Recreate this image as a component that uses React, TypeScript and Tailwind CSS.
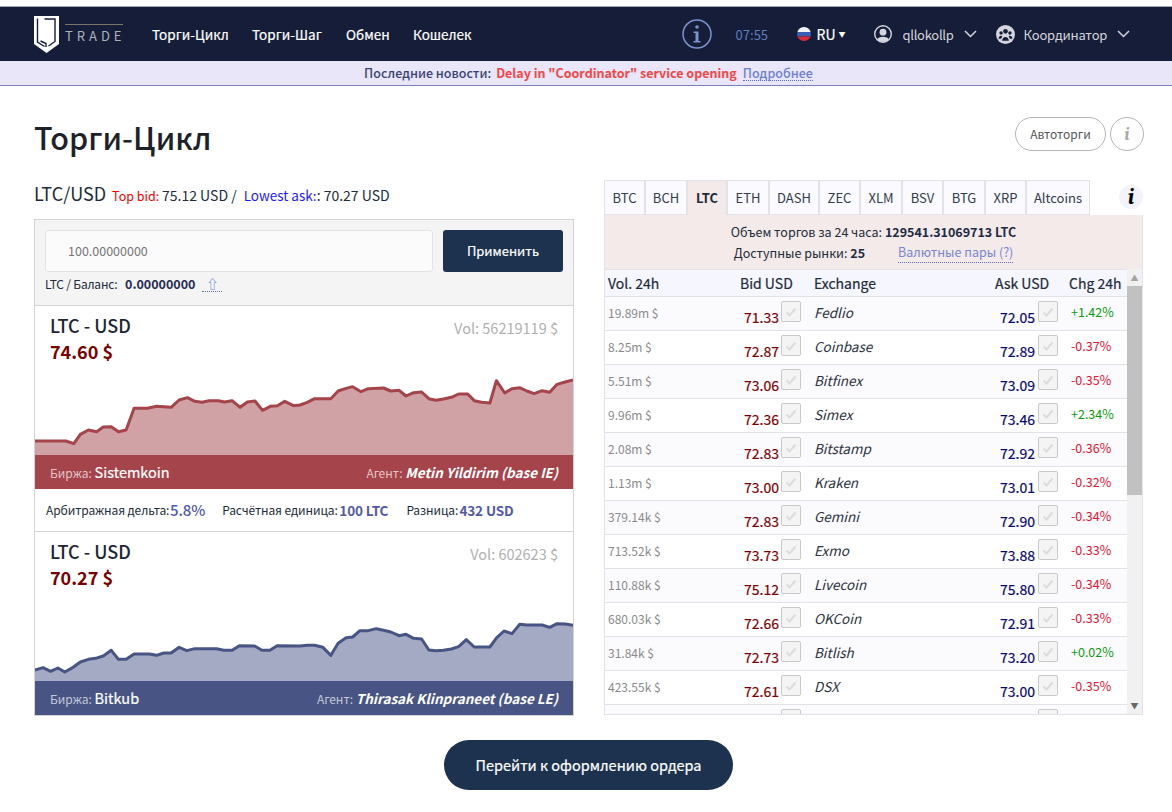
import React from "react";

const redPts = "40,693 125,693 147,701 165,673 187,660 210,665 228,651 250,650 270,665 291,660 313,595 350,595 375,589 415,592 437,570 460,563 480,574 500,577 520,572 545,572 562,576 583,572 605,592 625,576 646,573 667,601 688,589 708,587 728,574 752,587 770,585 790,577 810,566 855,566 875,543 897,535 915,530 938,545 958,536 1000,534 1020,543 1043,541 1062,558 1083,548 1105,546 1125,566 1145,571 1165,567 1187,562 1207,552 1232,552 1250,572 1270,577 1293,579 1311,512 1334,549 1354,536 1375,533 1395,543 1415,551 1437,542 1458,547 1478,523 1500,516 1522,510";
const bluePts = "40,540 62,533 83,544 103,534 122,546 145,532 165,516 187,508 207,505 228,498 250,481 270,508 291,508 313,492 355,492 375,496 395,489 415,489 437,472 458,482 480,476 540,476 560,481 583,481 603,467 645,468 665,481 687,481 707,467 770,468 790,466 810,466 833,472 855,496 875,460 897,443 915,441 935,422 958,422 980,416 1000,421 1020,426 1043,437 1062,433 1083,445 1105,447 1125,480 1145,482 1165,481 1187,477 1207,470 1228,449 1250,471 1293,471 1312,443 1332,423 1354,431 1375,403 1395,405 1437,405 1458,412 1478,401 1500,402 1522,406";

const rows: [string, string, string, string, string][] = [
  ["19.89m $", "71.33", "Fedlio", "72.05", "+1.42%"],
  ["8.25m $", "72.87", "Coinbase", "72.89", "-0.37%"],
  ["5.51m $", "73.06", "Bitfinex", "73.09", "-0.35%"],
  ["9.96m $", "72.36", "Simex", "73.46", "+2.34%"],
  ["2.08m $", "72.83", "Bitstamp", "72.92", "-0.36%"],
  ["1.13m $", "73.00", "Kraken", "73.01", "-0.32%"],
  ["379.14k $", "72.83", "Gemini", "72.90", "-0.34%"],
  ["713.52k $", "73.73", "Exmo", "73.88", "-0.33%"],
  ["110.88k $", "75.12", "Livecoin", "75.80", "-0.34%"],
  ["680.03k $", "72.66", "OKCoin", "72.91", "-0.33%"],
  ["31.84k $", "72.73", "Bitlish", "73.20", "+0.02%"],
  ["423.55k $", "72.61", "DSX", "73.00", "-0.35%"],
  ["", "", "", "", ""],
];

const tabs = ["BTC", "BCH", "LTC", "ETH", "DASH", "ZEC", "XLM", "BSV", "BTG", "XRP", "Altcoins"];
const tabW = [41, 42, 40, 42, 50, 41, 42, 41, 42, 41, 64];

function Check() {
  return (
    <span className="flex h-[21px] w-[20px] shrink-0 items-center justify-center rounded-[2px] border border-[#c9c9c9] bg-[#f4f4f4]">
      <svg width="12" height="10" viewBox="0 0 12 10" fill="none">
        <path d="M1.5 5.5 L4.5 8.5 L10.5 1.5" stroke="#dcdcdc" strokeWidth="2" />
      </svg>
    </span>
  );
}

function Chart({ pts, line, fill, top, h }: { pts: string; line: string; fill: string; top: number; h: number }) {
  const bottom = top + h * 3;
  return (
    <svg className="block w-full" height={h} viewBox={`40 ${top} 1482 ${h * 3}`} preserveAspectRatio="none">
      <polygon points={`40,${bottom} ${pts} 1522,${bottom}`} fill={fill} />
      <polyline points={pts} fill="none" stroke={line} strokeWidth="3" vectorEffect="non-scaling-stroke" strokeLinejoin="round" />
    </svg>
  );
}

function Card(p: { price: string; vol: string; pts: string; line: string; fill: string; bar: string; top: number; h: number; ex: string; agent: string; labelColor: string }) {
  return (
    <div>
      <div className="flex h-[70px] justify-between px-[15px] pt-[7px]">
        <div>
          <div className="text-[18px] font-medium leading-[24px] text-[#1d2433]">LTC - USD</div>
          <div className="mt-[1px] text-[18px] font-bold leading-[26px] text-[#7a0000]">{p.price}</div>
        </div>
        <div className="pt-[3px] text-[14.5px] leading-[24px] text-[#b0b0b0]">{p.vol}</div>
      </div>
      <Chart pts={p.pts} line={p.line} fill={p.fill} top={p.top} h={p.h} />
      <div className={`flex h-[34px] items-center justify-between px-[15px] text-white ${p.bar}`}>
        <div className="text-[14.5px] leading-[34px] [-webkit-text-stroke:0.2px]">
          <span className={`text-[12px] [-webkit-text-stroke:0px] ${p.labelColor}`}>Биржа: </span>
          {p.ex}
        </div>
        <div className="text-[13.5px] font-bold italic leading-[34px]">
          <span className={`text-[12px] font-normal not-italic ${p.labelColor}`}>Агент: </span>
          {p.agent}
        </div>
      </div>
    </div>
  );
}

function Logo() {
  return (
    <div className="flex items-start">
      <svg width="26" height="37" viewBox="0 0 26 37" fill="none">
        <path d="M0 0 H25 V28 L12.5 37 L0 28 Z" fill="#ffffff" />
        <path d="M3.5 2.5 V26 L10.5 30.5 M6.5 25 L12 27.5 V31" stroke="#151d38" strokeWidth="1.4" />
        <path d="M10.5 3 H21 V25.5 L14.5 30" stroke="#151d38" strokeWidth="1.4" />
      </svg>
      <div className="ml-[5px] mt-[8px] w-[58px]">
        <div className="h-px bg-[#7c7566]" />
        <div className="mt-[2px] text-[13px] leading-[18px] tracking-[4px] text-[#aeb2be]">TRADE</div>
      </div>
    </div>
  );
}

export default function App() {
  return (
    <div className="h-[812px] w-[1172px] overflow-hidden bg-white text-[14px] text-[#222b3a]" style={{ fontFamily: '"Noto Sans CJK JP", "Noto Sans", sans-serif' }}>
      <div className="h-[6px] bg-white" />
      <div className="h-px bg-[#a9a9a9]" />
      <header className="flex h-[54px] items-center bg-[#151d38] pl-[34px] text-white">
        <Logo />
        <nav className="ml-[29px] flex text-[13.5px] leading-[20px] [-webkit-text-stroke:0.2px]">
          <span className="w-[100px]">Торги-Цикл</span>
          <span className="w-[94px]">Торги-Шаг</span>
          <span className="w-[67px]">Обмен</span>
          <span>Кошелек</span>
        </nav>
        <div className="ml-[210px] flex items-center">
          <svg width="30" height="30" viewBox="0 0 30 30" fill="none" className="text-[#7d93cf]">
            <circle cx="15" cy="15" r="14" stroke="currentColor" strokeWidth="1.5" />
            <circle cx="15" cy="8" r="1.8" fill="currentColor" />
            <path d="M11.5 12.5 H16.5 V22 H18.5 V23.5 H11.5 V22 H13.5 V14 H11.5 Z" fill="currentColor" />
          </svg>
          <span className="ml-[24px] w-[61px] pt-[1px] text-[13px] text-[#5f7dc0]">07:55</span>
          <svg width="14" height="14" viewBox="0 0 14 14" className="rounded-full">
            <rect width="14" height="5" fill="#f2f2f4" />
            <rect y="5" width="14" height="4.5" fill="#3b5db5" />
            <rect y="9.5" width="14" height="4.5" fill="#d92b3a" />
          </svg>
          <span className="ml-[6px] text-[14px] leading-[20px] [-webkit-text-stroke:0.2px]">RU</span>
          <span className="ml-[3px] text-[7px]">▼</span>
          <svg className="ml-[28px]" width="18" height="18" viewBox="0 0 18 18">
            <circle cx="9" cy="9" r="8.3" fill="none" stroke="#d4d6dc" strokeWidth="1.4" />
            <circle cx="9" cy="7.2" r="3.4" fill="#d4d6dc" />
            <path d="M3.2 14.5 C4 10.8 14 10.8 14.8 14.5 C12 17.6 6 17.6 3.2 14.5 Z" fill="#d4d6dc" />
          </svg>
          <span className="ml-[11px] w-[50px] pt-[1px] text-[13px] tracking-[-0.3px] text-[#d4d6dc]">qllokollp</span>
          <svg className="ml-[11px]" width="13" height="8" viewBox="0 0 13 8" fill="none"><path d="M1 1 L6.5 6.5 L12 1" stroke="#d4d6dc" strokeWidth="1.5" /></svg>
          <svg className="ml-[19px]" width="19" height="19" viewBox="0 0 18 18">
            <circle cx="9" cy="9" r="9" fill="#d4d6dc" />
            <circle cx="9" cy="6" r="2.2" fill="#151d38" />
            <circle cx="4.8" cy="7.6" r="1.6" fill="#151d38" />
            <circle cx="13.2" cy="7.6" r="1.6" fill="#151d38" />
            <path d="M5.8 15 C6 10 12 10 12.2 15 Z M2.4 13 C2.6 9.8 5.5 9.8 6 10.8 L4.8 13 Z M15.6 13 C15.4 9.8 12.5 9.8 12 10.8 L13.2 13 Z" fill="#151d38" />
          </svg>
          <span className="ml-[9px] w-[83px] pt-[1px] text-[13px] tracking-[-0.2px] text-[#d4d6dc]">Координатор</span>
          <svg className="ml-[10px]" width="13" height="8" viewBox="0 0 13 8" fill="none"><path d="M1 1 L6.5 6.5 L12 1" stroke="#d4d6dc" strokeWidth="1.5" /></svg>
        </div>
      </header>
      <div className="flex h-[25px] items-center justify-center border-b border-[#7b80b8] bg-[#e8e6f8] pl-[5px] text-[12.5px] font-medium leading-[24px]">
        <span className="text-[#3a4470]">Последние новости:</span>
        <span className="ml-[5px] font-bold text-[#f44545]">Delay in "Coordinator" service opening</span>
        <span className="ml-[6px] border-b border-dotted border-[#5d6bc9] leading-[15px] text-[#6f7fd0]">Подробнее</span>
      </div>

      <div className="flex items-start justify-between pl-[34px] pr-[28px] pt-[29px]">
        <h1 className="text-[30.5px] font-medium leading-[44px] text-[#1d2229]">Торги-Цикл</h1>
        <div className="flex items-center gap-[4px] pt-[2px]">
          <span className="flex h-[34px] w-[91px] items-center justify-center rounded-full border border-[#b5b5b5] text-[12px] text-[#555]">Автоторги</span>
          <span className="flex h-[34px] w-[34px] items-center justify-center rounded-full border border-[#b5b5b5] font-serif text-[18px] font-bold italic text-[#a8a8a8]">i</span>
        </div>
      </div>

      <div className="flex items-start pl-[34px] pt-[21px]">
        <div className="w-[540px]">
          <div className="-mt-px flex h-[39px] items-baseline leading-[28px]">
            <span className="text-[18px] text-[#222b3a]">LTC/USD</span>
            <span className="ml-[6px] text-[14px]">
              <span className="text-[12.5px] text-[#f00000]">Top bid: </span>75.12 USD /
              <span className="ml-[7px] text-[13.5px] text-[#1a1aff]">Lowest ask:</span>: 70.27 USD
            </span>
          </div>
          <div className="mt-px border border-[#d4d4d4]">
            <div className="h-[86px] border-b border-[#d4d4d4] bg-[#f4f4f4] px-[10px] pt-[10px]">
              <div className="flex justify-between">
                <div className="flex h-[42px] w-[388px] items-center rounded-[3px] border border-[#e3e3e3] bg-[#fbfbfb] pl-[22px] text-[12.5px] text-[#757575]">100.00000000</div>
                <div className="flex h-[42px] w-[120px] items-center justify-center rounded-[3px] bg-[#1c324e] text-[13px] text-white [-webkit-text-stroke:0.2px]">Применить</div>
              </div>
              <div className="mt-[2px] flex items-center text-[12px] leading-[20px]">
                <span className="w-[72px] whitespace-nowrap tracking-[-0.2px]">LTC / Баланс:</span>
                <span className="ml-[8px] text-[12.5px] font-bold text-[#1f2a52]">0.00000000</span>
                <span className="ml-[7px] w-[20px] border-b border-dotted border-[#5d6bc9] text-center text-[12px] font-bold leading-[14px] text-[#6f86e0]">⇧</span>
              </div>
            </div>
            <Card price="74.60 $" vol="Vol: 56219119 $" pts={redPts} line="#a5444b" fill="#d0a2a5" bar="bg-[#a5444b]" top={498} h={79} ex="Sistemkoin" agent="Metin Yildirim (base IE)" labelColor="text-[#e3c5c7]" />
            <div className="flex h-[43px] items-center border-b border-[#d4d4d4] pl-[11px] text-[12px] tracking-[-0.1px]">
              <span className="w-[121px] whitespace-nowrap">Арбитражная дельта: </span>
              <span className="ml-[3px] text-[15px] font-medium text-[#5258a8]">5.8%</span>
              <span className="ml-[17px] w-[113px] whitespace-nowrap">Расчётная единица: </span>
              <span className="ml-[4px] text-[13.5px] font-bold text-[#5258a8]">100 LTC</span>
              <span className="ml-[18px] w-[49px] whitespace-nowrap">Разница: </span>
              <span className="ml-[4px] text-[13.5px] font-bold text-[#5258a8]">432 USD</span>
            </div>
            <Card price="70.27 $" vol="Vol: 602623 $" pts={bluePts} line="#485584" fill="#a4aac3" bar="bg-[#485584]" top={336} h={79} ex="Bitkub" agent="Thirasak Klinpraneet (base LE)" labelColor="text-[#c3c8da]" />
          </div>
        </div>

        <div className="ml-[30px] w-[539px]">
          <div className="relative flex h-[35px]">
            {tabs.map((t, i) => (
              <span
                key={t}
                style={{ width: tabW[i] }}
                className={t === "LTC"
                  ? "flex items-center justify-center border border-b-0 border-[#e2e2e8] bg-[#f3eae9] text-[13px] font-bold"
                  : "flex items-center justify-center border border-[#e2e2e8] bg-[#fafaff] text-[13px] text-[#333b4d]"}
              >
                {t}
              </span>
            ))}
            <span className="absolute right-0 top-[5px] flex h-[24px] w-[24px] items-center justify-center rounded-full bg-[#f3f3fb] font-serif text-[22px] font-bold italic leading-none text-black">i</span>
          </div>
          <div className="border border-t-0 border-[#e2e2e8]">
            <div className="h-[54px] bg-[#f3eae9] text-center text-[12.5px] leading-[21px]">
              <div className="pt-[6px]">Объем торгов за 24 часа: <b className="font-bold text-[#1f2a44]">129541.31069713 LTC</b></div>
              <div className="flex justify-center">
                <span>Доступные рынки: <b className="font-bold text-[#1f2a44]">25</b></span>
                <span className="ml-[33px] border-b border-dotted border-[#5d6bc9] leading-[19px] text-[#7a86d0]">Валютные пары (?)</span>
              </div>
            </div>
            <div className="flex h-[445px] overflow-hidden">
              <div className="w-[522px] overflow-hidden">
                <div className="grid h-[28px] grid-cols-[132px_74px_181px_74px_58px] items-center border-y border-[#e2e2e8] bg-[#f5f6fe] pl-[3px] text-[14px] leading-[20px] [-webkit-text-stroke:0.2px]">
                  <span>Vol. 24h</span>
                  <span>Bid USD</span>
                  <span>Exchange</span>
                  <span>Ask USD</span>
                  <span>Chg 24h</span>
                </div>
                {rows.map((r, i) => (
                  <div key={i} className={`flex h-[34px] border-b border-[#e2e2e8] ${i % 2 ? "bg-white" : "bg-[#fbfbfe]"}`}>
                    <span className="w-[135px] pl-[3px] pt-[6px] text-[12px] leading-[20px] text-[#8a8a8a]">{r[0]}</span>
                    <span className="w-[39px] pt-[10px] text-right text-[14px] leading-[20px] text-[#7a0000] [-webkit-text-stroke:0.2px]">{r[1]}</span>
                    <span className="ml-[2px] pt-[4px]"><Check /></span>
                    <span className="ml-[13px] w-[182px] pt-[5px] text-[13.5px] italic leading-[20px] text-[#2c3140]">{r[2]}</span>
                    <span className="w-[39px] pt-[10px] text-right text-[14px] leading-[20px] text-[#08086e] [-webkit-text-stroke:0.2px]">{r[3]}</span>
                    <span className="ml-[3px] pt-[4px]"><Check /></span>
                    <span className={`ml-[13px] pt-[5px] text-[12.5px] leading-[20px] ${r[4].startsWith("+") ? "text-[#0a9a0a]" : "text-[#e8112d]"}`}>{r[4]}</span>
                  </div>
                ))}
              </div>
              <div className="flex w-[15px] flex-col items-center bg-[#f1f1f1] text-[#6a6a6a]">
                <span className="h-[17px] text-[8px] leading-[17px] text-[#a3a3a3]">▲</span>
                <div className="h-[209px] w-full bg-[#c1c1c1]" />
                <div className="flex-1" />
                <span className="h-[17px] text-[8px] leading-[17px]">▼</span>
              </div>
            </div>
          </div>
        </div>
      </div>

      <div className="flex justify-center pl-[5px] pt-[24px]">
        <div className="flex h-[50px] w-[289px] items-center justify-center rounded-full bg-[#1c324e] text-[14.5px] text-white [-webkit-text-stroke:0.2px]">Перейти к оформлению ордера</div>
      </div>
    </div>
  );
}
